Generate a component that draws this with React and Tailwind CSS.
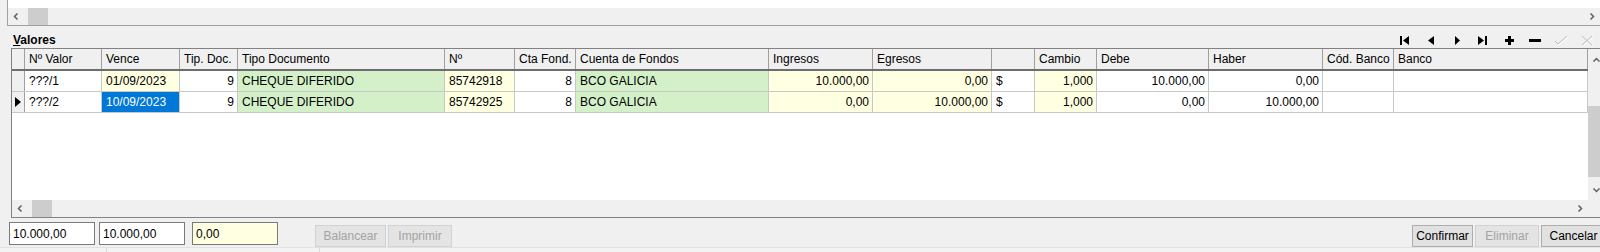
import React from 'react';

const gridCols =
  'grid grid-cols-[13px_77px_78px_58px_207px_70px_61px_193px_104px_119px_43px_62px_112px_114px_71px_194px]';

const headers = [
  'Nº Valor', 'Vence', 'Tip. Doc.', 'Tipo Documento', 'Nº', 'Cta Fond.', 'Cuenta de Fondos',
  'Ingresos', 'Egresos', '', 'Cambio', 'Debe', 'Haber', 'Cód. Banco', 'Banco',
];

const bgClass = {
  w: 'bg-white',
  y: 'bg-[#ffffe1]',
  g: 'bg-[#d3f0c8]',
  s: 'bg-[#0078d7] text-white',
};

const rows = [
  {
    current: false,
    cells: [
      ['???/1', 'l', 'w'], ['01/09/2023', 'l', 'y'], ['9', 'r', 'w'], ['CHEQUE DIFERIDO', 'l', 'g'],
      ['85742918', 'l', 'y'], ['8', 'r', 'w'], ['BCO GALICIA', 'l', 'g'], ['10.000,00', 'r', 'y'],
      ['0,00', 'r', 'y'], ['$', 'l', 'w'], ['1,000', 'r', 'y'], ['10.000,00', 'r', 'w'],
      ['0,00', 'r', 'w'], ['', 'l', 'w'], ['', 'l', 'w'],
    ],
  },
  {
    current: true,
    cells: [
      ['???/2', 'l', 'w'], ['10/09/2023', 'l', 's'], ['9', 'r', 'w'], ['CHEQUE DIFERIDO', 'l', 'g'],
      ['85742925', 'l', 'y'], ['8', 'r', 'w'], ['BCO GALICIA', 'l', 'g'], ['0,00', 'r', 'y'],
      ['10.000,00', 'r', 'y'], ['$', 'l', 'w'], ['1,000', 'r', 'y'], ['0,00', 'r', 'w'],
      ['10.000,00', 'r', 'w'], ['', 'l', 'w'], ['', 'l', 'w'],
    ],
  },
];

const Chevron = ({ dir }) => {
  const d = {
    left: 'M5.5 1.5 L2.5 4.5 L5.5 7.5',
    right: 'M3.5 1.5 L6.5 4.5 L3.5 7.5',
    up: 'M1.5 5.5 L4.5 2.5 L7.5 5.5',
    down: 'M1.5 3.5 L4.5 6.5 L7.5 3.5',
  }[dir];
  return (
    <svg width="9" height="9" viewBox="0 0 9 9">
      <path d={d} fill="none" stroke="#606060" strokeWidth="1.5" />
    </svg>
  );
};

const NavIcon = ({ kind }) => {
  switch (kind) {
    case 'first':
      return (
        <svg width="10" height="9" viewBox="0 0 10 9">
          <rect x="0" y="0" width="2" height="9" fill="#000" />
          <polygon points="9,0 3,4.5 9,9" fill="#000" />
        </svg>
      );
    case 'prev':
      return (
        <svg width="7" height="9" viewBox="0 0 7 9">
          <polygon points="6,0 0,4.5 6,9" fill="#000" />
        </svg>
      );
    case 'next':
      return (
        <svg width="7" height="9" viewBox="0 0 7 9">
          <polygon points="1,0 6,4.5 1,9" fill="#000" />
        </svg>
      );
    case 'last':
      return (
        <svg width="10" height="9" viewBox="0 0 10 9">
          <polygon points="0,0 6,4.5 0,9" fill="#000" />
          <rect x="7" y="0" width="2" height="9" fill="#000" />
        </svg>
      );
    case 'plus':
      return (
        <svg width="9" height="9" viewBox="0 0 9 9">
          <rect x="3" y="0" width="3" height="9" fill="#000" />
          <rect x="0" y="3" width="9" height="3" fill="#000" />
        </svg>
      );
    case 'minus':
      return (
        <svg width="12" height="9" viewBox="0 0 12 9">
          <rect x="0" y="3" width="12" height="3" fill="#000" />
        </svg>
      );
    case 'check':
      return (
        <svg width="14" height="11" viewBox="0 0 14 11">
          <path d="M1 6 L4 9 L13 1" fill="none" stroke="#ffffff" strokeWidth="1" transform="translate(1 1)" />
          <path d="M1 6 L4 9 L13 1" fill="none" stroke="#bdbdbd" strokeWidth="1" />
        </svg>
      );
    default:
      return (
        <svg width="12" height="11" viewBox="0 0 12 11">
          <path d="M1 1 L11 10 M11 1 L1 10" fill="none" stroke="#ffffff" strokeWidth="1" transform="translate(1 1)" />
          <path d="M1 1 L11 10 M11 1 L1 10" fill="none" stroke="#bdbdbd" strokeWidth="1" />
        </svg>
      );
  }
};

const HScroll = ({ className }) => (
  <div className={`h-[17px] flex items-center bg-[#f0f0f0] ${className}`}>
    <div className="w-[17px] h-[17px] flex items-center justify-center">
      <Chevron dir="left" />
    </div>
    <div className="ml-[3px] w-[20px] h-[17px] bg-[#cdcdcd]" />
    <div className="ml-auto w-[17px] h-[17px] flex items-center justify-center">
      <Chevron dir="right" />
    </div>
  </div>
);

const Field = ({ value, yellow }) => (
  <div
    className={`h-[23px] w-[86px] border border-[#7a7a7a] flex items-center pl-[3px] ${
      yellow ? 'bg-[#ffffe1]' : 'bg-white'
    }`}
  >
    {value}
  </div>
);

const Btn = ({ label, disabled, className }) => (
  <div
    className={`h-[22px] flex items-center justify-center border ${
      disabled ? 'bg-[#e4e4e4] border-[#d2d2d2] text-[#a3a3a3]' : 'bg-[#e1e1e1] border-[#adadad] text-black'
    } ${className}`}
  >
    {label}
  </div>
);

export default function App() {
  return (
    <div className="w-[1600px] h-[252px] overflow-hidden bg-[#f0f0f0] text-[12px] leading-[14px] text-black [font-family:'Liberation_Sans',Arial,sans-serif]">
      {/* panel arriba, solo se ve el scroll */}
      <div className="ml-[7px] h-[26px] border-l border-b border-[#a0a0a0] flex flex-col">
        <div className="h-[8px] bg-white" />
        <HScroll className="" />
      </div>

      {/* titulo + navegador */}
      <div className="h-[22px] flex">
        <div className="ml-[13px] pt-[7px] font-bold">
          <span className="underline">V</span>alores
        </div>
        <div className="ml-auto pt-[6px] flex">
          {['first', 'prev', 'next', 'last', 'plus', 'minus', 'check', 'cancel'].map((k) => (
            <div key={k} className="w-[26px] h-[16px] flex items-center justify-center">
              <NavIcon kind={k} />
            </div>
          ))}
        </div>
      </div>

      {/* grilla */}
      <div className="ml-[11px] w-[1594px] h-[170px] border-l border-t border-b border-[#828282] flex flex-col">
        <div className="flex h-[151px]">
          <div className="w-[1576px] bg-white flex flex-col">
            <div className={`${gridCols} h-[22px] border-b-2 border-[#6d6d6d] bg-[#f0f0f0]`}>
              <div className="border-r border-[#a0a0a0]" />
              {headers.map((h, i) => (
                <div
                  key={i}
                  className="flex items-center pl-[4px] border-r border-[#a0a0a0] whitespace-nowrap overflow-hidden"
                >
                  {h}
                </div>
              ))}
            </div>
            {rows.map((row, ri) => (
              <div key={ri} className={`${gridCols} h-[21px] border-b border-[#c8c8c8]`}>
                <div className="bg-[#f0f0f0] border-r border-[#a0a0a0] flex items-center justify-center">
                  {row.current && (
                    <svg width="6" height="10" viewBox="0 0 6 10">
                      <polygon points="0,0 6,5 0,10" fill="#000" />
                    </svg>
                  )}
                </div>
                {row.cells.map(([text, align, bg], ci) => (
                  <div
                    key={ci}
                    className={`flex items-center border-r border-[#c8c8c8] whitespace-nowrap overflow-hidden ${
                      align === 'r' ? 'justify-end pr-[3px]' : 'pl-[4px]'
                    } ${bgClass[bg]}`}
                  >
                    {text}
                  </div>
                ))}
              </div>
            ))}
          </div>
          <div className="w-[17px] bg-[#f0f0f0] flex flex-col items-center">
            <div className="h-[22px] flex items-center">
              <Chevron dir="up" />
            </div>
            <div className="mt-[35px] w-[17px] h-[71px] bg-[#cdcdcd]" />
            <div className="mt-[7px] h-[10px] flex items-center">
              <Chevron dir="down" />
            </div>
          </div>
        </div>
        <div className="flex h-[17px]">
          <HScroll className="w-[1576px]" />
          <div className="w-[17px] bg-[#f0f0f0]" />
        </div>
      </div>

      {/* totales y botones */}
      <div className="h-[29px] flex items-start">
        <div className="ml-[9px] mt-[4px]">
          <Field value="10.000,00" />
        </div>
        <div className="ml-[4px] mt-[4px]">
          <Field value="10.000,00" />
        </div>
        <div className="ml-[7px] mt-[4px]">
          <Field value="0,00" yellow />
        </div>
        <Btn label="Balancear" disabled className="ml-[37px] mt-[7px] w-[71px]" />
        <Btn label="Imprimir" disabled className="ml-[2px] mt-[7px] w-[64px]" />
        <Btn label="Confirmar" className="ml-auto mt-[7px] w-[61px]" />
        <Btn label="Eliminar" disabled className="ml-[2px] mt-[7px] w-[64px]" />
        <Btn label="Cancelar" className="ml-[2px] -mr-[6px] mt-[7px] w-[65px] shrink-0" />
      </div>

      {/* barra de estado */}
      <div className="h-[5px] flex border-t border-[#e2e2e2] bg-[#f3f3f3]">
        <div className="w-[107px] border-r border-[#dadada]" />
        <div className="w-[213px] border-r border-[#dadada]" />
      </div>
    </div>
  );
}
